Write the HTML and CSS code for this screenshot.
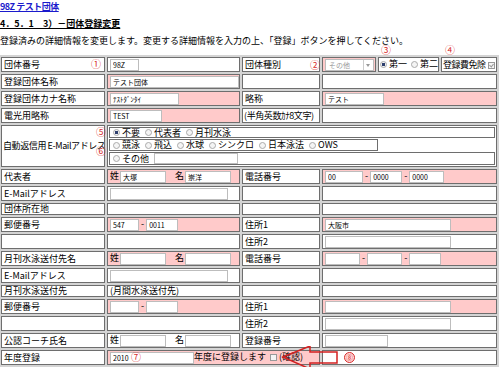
FILE: index.html
```html
<!DOCTYPE html>
<html lang="ja">
<head>
    <meta charset="UTF-8">
    <meta name="viewport" content="width=device-width, initial-scale=1.0">
    <title>団体登録変更</title>
    <link rel="stylesheet" href="styles.css">
</head>
<body>
    <a class="group-link" href="#">98Z テスト団体</a>
    <h1 class="page-title">4．5．1　3）－団体登録変更</h1>
    <p class="lead">登録済みの詳細情報を変更します。変更する詳細情報を入力の上、「登録」ボタンを押してください。</p>

    <div class="form-wrap">
        <table class="entry">
            <colgroup>
                <col class="c1"><col class="c2"><col class="c3"><col class="c4a"><col class="c4b"><col class="c4c">
            </colgroup>
            <tr>
                <td>団体番号</td>
                <td><input class="in" style="width:29px" value="98Z"></td>
                <td>団体種別</td>
                <td class="req">
                    <span class="select"><span class="select-text">その他</span><span class="select-arrow"></span></span>
                </td>
                <td class="kind">
                    <label class="opt"><input type="radio" name="kind" checked>第一</label>
                    <label class="opt"><input type="radio" name="kind">第二</label>
                </td>
                <td class="fee">登録費免除<span class="check on"></span></td>
            </tr>
            <tr>
                <td>登録団体名称</td>
                <td class="req"><input class="in" style="width:129px" value="テスト団体"></td>
                <td></td>
                <td colspan="3"></td>
            </tr>
            <tr>
                <td>登録団体カナ名称</td>
                <td class="req"><input class="in" style="width:69px" value="ﾃｽﾄﾀﾞﾝﾀｲ"></td>
                <td>略称</td>
                <td class="req" colspan="3"><input class="in" style="width:59px" value="テスト"></td>
            </tr>
            <tr>
                <td>電光用略称</td>
                <td class="req"><input class="in" style="width:52px" value="TEST"></td>
                <td class="tight">(半角英数ｶﾅ8文字)</td>
                <td colspan="3"></td>
            </tr>
            <tr>
                <td class="tight">自動返信用 E-Mailアドレス</td>
                <td class="mail-opts" colspan="5">
                    <div class="opt-row">
                        <label class="opt"><input type="radio" name="mail" checked>不要</label>
                        <label class="opt"><input type="radio" name="mail">代表者</label>
                        <label class="opt"><input type="radio" name="mail">月刊水泳</label>
                    </div>
                    <div class="opt-row part">
                        <label class="opt"><input type="radio" name="mail">競泳</label>
                        <label class="opt"><input type="radio" name="mail">飛込</label>
                        <label class="opt"><input type="radio" name="mail">水球</label>
                        <label class="opt"><input type="radio" name="mail">シンクロ</label>
                        <label class="opt"><input type="radio" name="mail">日本泳法</label>
                        <label class="opt"><input type="radio" name="mail">OWS</label>
                    </div>
                    <div class="opt-row">
                        <label class="opt"><input type="radio" name="mail">その他</label>
                        <input class="in" style="width:84px">
                    </div>
                </td>
            </tr>
            <tr>
                <td>代表者</td>
                <td class="req">姓<input class="in name" value="大塚">　名<input class="in name" value="崇洋"></td>
                <td>電話番号</td>
                <td class="req" colspan="3"><input class="in" style="width:38px" value="00"> - <input class="in" style="width:32px" value="0000"> - <input class="in" style="width:35px" value="0000"></td>
            </tr>
            <tr>
                <td>E-Mailアドレス</td>
                <td><input class="in" style="width:118px"></td>
                <td></td>
                <td colspan="3"></td>
            </tr>
            <tr class="thin">
                <td>団体所在地</td>
                <td></td>
                <td></td>
                <td colspan="3"></td>
            </tr>
            <tr>
                <td>郵便番号</td>
                <td class="req"><input class="in" style="width:29px" value="547"> - <input class="in" style="width:32px" value="0011"></td>
                <td>住所1</td>
                <td class="req" colspan="3"><input class="in addr" value="大阪市"></td>
            </tr>
            <tr>
                <td></td>
                <td></td>
                <td>住所2</td>
                <td colspan="3"><input class="in addr"></td>
            </tr>
            <tr>
                <td>月刊水泳送付先名</td>
                <td class="req">姓<input class="in name">　名<input class="in name"></td>
                <td>電話番号</td>
                <td class="req" colspan="3"><input class="in" style="width:35px"> - <input class="in" style="width:35px"> - <input class="in" style="width:32px"></td>
            </tr>
            <tr>
                <td>E-Mailアドレス</td>
                <td><input class="in" style="width:118px"></td>
                <td></td>
                <td colspan="3"></td>
            </tr>
            <tr class="thin">
                <td>月刊水泳送付先</td>
                <td>(月間水泳送付先)</td>
                <td></td>
                <td colspan="3"></td>
            </tr>
            <tr>
                <td>郵便番号</td>
                <td class="req"><input class="in" style="width:29px"> - <input class="in" style="width:32px"></td>
                <td>住所1</td>
                <td class="req" colspan="3"><input class="in addr"></td>
            </tr>
            <tr>
                <td></td>
                <td></td>
                <td>住所2</td>
                <td colspan="3"><input class="in addr"></td>
            </tr>
            <tr>
                <td>公認コーチ氏名</td>
                <td>姓<input class="in name">　名<input class="in name"></td>
                <td>登録番号</td>
                <td colspan="3"><input class="in" style="width:63px"></td>
            </tr>
            <tr>
                <td>年度登録</td>
                <td class="req" colspan="2"><input class="in" style="width:84px" value="2010">年度に登録します <span class="check"></span> (確認)</td>
                <td colspan="3"></td>
            </tr>
        </table>

        <!-- annotation marks laid over the captured form -->
        <span class="mark m1">①</span>
        <span class="mark m2">②</span>
        <span class="mark m3">③</span>
        <span class="mark m4">④</span>
        <span class="mark m5">⑤</span>
        <span class="mark m6">⑥</span>
        <span class="mark m7">⑦</span>
        <span class="mark m8">⑧</span>
        <svg class="arrow" width="70" height="30" viewBox="0 0 70 30">
            <path d="M2 11 L29 0 L29 6 L56 6 L56 17 L29 17 L29 23 Z" fill="none" stroke="#d42020" stroke-width="1.5" stroke-linejoin="miter"/>
        </svg>
    </div>
</body>
</html>
```

FILE: styles.css
```css
body{
    margin: 0;
    font-family: "Noto Sans CJK JP", "Noto Sans", sans-serif;
    font-size: 9px;
    color: #000;
    background-color: #fff;
    overflow: hidden;
}
.group-link{
    display: block;
    height: 13px;
    line-height: 13px;
    color: #1a1acc;
    font-weight: bold;
    letter-spacing: -0.5px;
}
.page-title{
    margin: 4px 0 0;
    font-size: 9px;
    line-height: 13px;
    font-weight: bold;
    text-decoration: underline;
}
.lead{
    margin: 4px 0 0;
    line-height: 13px;
}
/* __________________________________________________________ */
.form-wrap{
    position: relative;
    margin-top: 8px;
}
.entry{
    width: 500px;
    margin-left: -1px;
    table-layout: fixed;
    border-collapse: separate;
    border-spacing: 2px;
    background-color: #d4d4d4;
}
.c1{ width: 104px; }
.c2{ width: 133px; }
.c3{ width: 78px; }
.c4a{ width: 54px; }
.c4b{ width: 61px; }
.c4c{ width: 56px; }
.entry td{
    height: 13px;
    padding: 0 2px;
    border: 1px solid #6e6e6e;
    background-color: #fff;
    white-space: nowrap;
    overflow: hidden;
    vertical-align: middle;
    line-height: 12px;
}
.entry .thin td{
    height: 10px;
    line-height: 10px;
}
.entry td.req{
    background-color: #ffcaca;
}
.entry td.tight{
    padding: 0 1px;
    letter-spacing: -0.4px;
}
.in{
    box-sizing: border-box;
    height: 12px;
    margin: 0;
    padding: 0 2px;
    border: 1px solid #bdbdbd;
    background-color: #fff;
    font-family: "Noto Sans CJK JP", "Noto Sans", sans-serif;
    font-size: 7px;
    vertical-align: middle;
}
.in.name{
    width: 46px;
    margin-left: 1px;
}
.in.addr{
    width: 126px;
}
.select{
    display: inline-flex;
    box-sizing: border-box;
    width: 49px;
    height: 12px;
    border: 1px solid #bdbdbd;
    background-color: #fff;
    vertical-align: middle;
}
.select-text{
    flex: 1;
    padding-left: 3px;
    color: #999;
    font-size: 7px;
    line-height: 10px;
}
.select-arrow{
    width: 9px;
    border-left: 1px solid #ccc;
    position: relative;
}
.select-arrow::after{
    content: "";
    position: absolute;
    left: 2px;
    top: 4px;
    border: 2.5px solid transparent;
    border-top: 3px solid #999;
}
.opt{
    display: inline-flex;
    align-items: center;
    margin-right: 5px;
}
.opt input{
    appearance: none;
    width: 7px;
    height: 7px;
    margin: 0 2px 0 0;
    border: 1px solid #aaa;
    border-radius: 50%;
    background-color: #f4f4f4;
}
.opt input:checked{
    background: radial-gradient(circle, #2d3f6e 0 1.5px, #f4f4f4 2px);
}
.entry td.kind{
    padding: 0 1px;
}
.kind .opt{
    margin-right: 2px;
}
.entry td.fee{
    padding: 0 1px;
    letter-spacing: -0.5px;
}
.check{
    display: inline-block;
    box-sizing: border-box;
    width: 7px;
    height: 7px;
    margin-left: 2px;
    border: 1px solid #999;
    background-color: #f4f4f4;
    vertical-align: middle;
    position: relative;
}
.check.on::after{
    content: "";
    position: absolute;
    left: 1px;
    top: 0;
    width: 2px;
    height: 3px;
    border: solid #999;
    border-width: 0 1px 1px 0;
    transform: rotate(40deg);
}
.entry td.mail-opts{
    height: 40px;
    padding: 0;
}
.opt-row{
    display: flex;
    align-items: center;
    height: 9px;
    margin: 1px;
    padding-left: 3px;
    border: 1px solid #6e6e6e;
}
.opt-row.part{
    height: 10px;
    width: 264px;
}
.opt-row:last-child{
    height: 11px;
}
.opt-row .in{
    height: 11px;
}
/* __________________________________________________________ */
.mark{
    position: absolute;
    width: 10px;
    height: 10px;
    margin: -5px 0 0 -5px;
    color: #d82a2a;
    font-size: 10px;
    line-height: 10px;
    text-align: center;
}
.m1{ left: 96px; top: 9px; }
.m2{ left: 315px; top: 10px; }
.m3{ left: 386px; top: -5px; }
.m4{ left: 450px; top: -5px; }
.m5{ left: 101px; top: 77px; }
.m6{ left: 101px; top: 96px; }
.m7{ left: 136px; top: 302px; }
.m8{
    left: 349px;
    top: 302px;
    width: 9px;
    height: 9px;
    border: 1px solid #d82a2a;
    border-radius: 50%;
    background-color: #ffd8d8;
    font-size: 7px;
    line-height: 9px;
}
.arrow{
    position: absolute;
    left: 281px;
    top: 291px;
}
```
